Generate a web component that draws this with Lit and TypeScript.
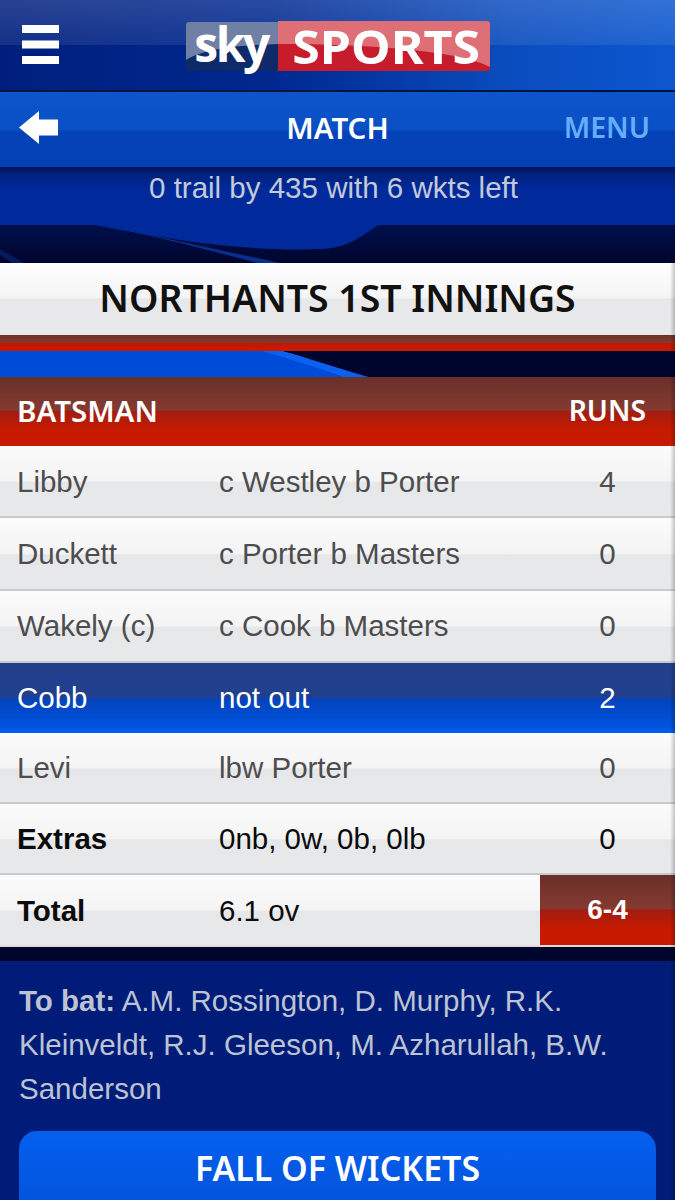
import {css, html, LitElement} from 'lit';
import {customElement} from 'lit/decorators.js';
import {classMap} from 'lit/directives/class-map.js';

interface Row {
  name: string;
  how: string;
  runs: string;
  kind?: 'live' | 'extras' | 'total';
}

const rows: Row[] = [
  {name: 'Libby', how: 'c Westley b Porter', runs: '4'},
  {name: 'Duckett', how: 'c Porter b Masters', runs: '0'},
  {name: 'Wakely (c)', how: 'c Cook b Masters', runs: '0'},
  {name: 'Cobb', how: 'not out', runs: '2', kind: 'live'},
  {name: 'Levi', how: 'lbw Porter', runs: '0'},
  {name: 'Extras', how: '0nb, 0w, 0b, 0lb', runs: '0', kind: 'extras'},
  {name: 'Total', how: '6.1 ov', runs: '6-4', kind: 'total'},
];

@customElement('app-root')
export class AppRoot extends LitElement {
  override render() {
    return html`
      <header class="top">
        <svg class="burger" viewBox="0 0 37 39" aria-hidden="true">
          <path d="M0 0h37v8H0zM0 15.500h37v8H0zM0 31h37v8H0z" fill="#fff" />
        </svg>
        <div class="logo">
          <svg class="logo-bg" viewBox="0 0 304 50" aria-hidden="true">
            <path d="M3 1h89v49H3a3 3 0 0 1-3-3V4a3 3 0 0 1 3-3z" fill="#0f2a68" />
            <path d="M92 0h209a3 3 0 0 1 3 3v44a3 3 0 0 1-3 3H92z" fill="#c61c2c" />
            <path d="M3 1h89v22C60 24 20 26 0 39V4a3 3 0 0 1 3-3z" fill="#6f80a4" />
            <path d="M92 0h209a3 3 0 0 1 3 3v43c-30-16-120-23-212-23z" fill="#df6f77" />
          </svg>
          <span class="sky">sky</span>
          <span class="sports"><span>SPORTS</span></span>
        </div>
      </header>

      <nav class="nav">
        <svg class="back" viewBox="0 0 39 33" aria-hidden="true">
          <path d="M0 16.500 20 0v8.500h19v16H20V33z" fill="#fff" />
        </svg>
        <span class="nav-title">MATCH</span>
        <span class="nav-menu">MENU</span>
      </nav>

      <section class="status">
        <svg class="swoosh" viewBox="0 0 675 38" preserveAspectRatio="none" aria-hidden="true">
          <defs>
            <linearGradient id="dark" x1="0" x2="0" y1="0" y2="1">
              <stop offset="0" stop-color="#000f4c" />
              <stop offset="1" stop-color="#00052e" />
            </linearGradient>
          </defs>
          <path d="M0 0h95c70 14 150 27 225 24 28-1 40-12 58-24h297v38H0z" fill="url(#dark)" />
          <path d="M100 0c60 12 125 26 180 38h-22C205 24 150 10 100 0z" fill="#07308e" />
          <path d="M0 24l24 14H12L0 30z" fill="#0a2a78" opacity="0.6" />
        </svg>
        <p>0 trail by 435 with 6 wkts left</p>
      </section>

      <h1 class="innings">NORTHANTS 1ST INNINGS</h1>
      <div class="red-strip"></div>
      <div class="swoosh-blue">
        <svg viewBox="0 0 675 26" aria-hidden="true">
          <path d="M0 0h282l86 26H0z" fill="#004cd8" />
          <path d="M262 0h20c30 8 56 18 86 26h-24C316 16 290 8 262 0z" fill="#0c62f0" />
        </svg>
      </div>

      <div class="thead">
        <span class="col-name">BATSMAN</span>
        <span>RUNS</span>
      </div>

      ${rows.map(
        (r) => html`
          <div class="row ${classMap({[r.kind ?? 'plain']: true})}">
            <span class="name">${r.name}</span>
            <span class="how">${r.how}</span>
            <span class="runs">${r.runs}</span>
          </div>
        `
      )}

      <div class="gap"></div>

      <section class="panel">
        <p><b>To bat:</b> A.M. Rossington, D. Murphy, R.K. Kleinveldt, R.J. Gleeson, M. Azharullah, B.W. Sanderson</p>
        <div class="button">FALL OF WICKETS</div>
      </section>

      <div class="edge"></div>
    `;
  }

  static override styles = css`
    :host {
      display: block;
      position: relative;
      width: 675px;
      height: 1200px;
      overflow: hidden;
      background: #00052e;
      font-family: 'Liberation Sans', Arial, sans-serif;
      --heading: 'Noto Sans', 'Open Sans', sans-serif;
    }

    .top {
      display: flex;
      align-items: center;
      height: 90px;
      padding-left: 22px;
      border-bottom: 2px solid #01123f;
      background:
        linear-gradient(180deg, rgba(255, 255, 255, 0.16) 0%, rgba(255, 255, 255, 0.08) 50%, rgba(0, 0, 0, 0) 50%),
        linear-gradient(90deg, #001f7d 0%, #00288f 40%, #0a4cbe 75%, #0c57cf 100%);
    }

    .burger {
      width: 37px;
      height: 39px;
      margin-top: -1px;
      flex: none;
    }

    .logo {
      display: flex;
      position: relative;
      height: 50px;
      width: 304px;
      margin: 1px 0 0 127px;
    }

    .logo-bg {
      position: absolute;
      inset: 0;
      width: 304px;
      height: 50px;
    }

    .logo > span {
      position: relative;
      display: flex;
      align-items: center;
      justify-content: center;
      color: #fff;
      font-weight: 700;
      box-sizing: border-box;
    }

    .sky {
      width: 92px;
      padding: 0 2px 5px 0;
      font-family: 'Open Sans', sans-serif;
      font-size: 48px;
      letter-spacing: -2.5px;
    }

    .sports {
      flex: 1;
      padding-left: 5px;
      font-family: 'Noto Sans', sans-serif;
      font-size: 46px;
    }

    .sports span {
      display: block;
      transform: scaleX(1.09);
    }

    .nav {
      display: grid;
      grid-template-columns: 1fr auto 1fr;
      align-items: center;
      height: 75px;
      box-sizing: border-box;
      padding: 0 26px 5px;
      background: linear-gradient(180deg, #0c55cc 0%, #0a4fc4 50%, #0442b8 53%, #0340b4 100%);
      font-family: var(--heading);
      font-weight: 600;
      font-size: 29.500px;
    }

    .back {
      width: 39px;
      height: 33px;
      margin-left: -7px;
    }

    .nav-title {
      color: #fff;
    }

    .nav-menu {
      justify-self: end;
      margin-right: -1px;
      color: #66aefc;
      font-size: 28.500px;
    }

    .status {
      position: relative;
      height: 96px;
      overflow: hidden;
      background: linear-gradient(180deg, #00145c 0%, #00227f 8%, #002a9c 25%, #002a9c 100%);
    }

    .status p {
      position: relative;
      margin: 0;
      padding: 3px 8px 0 0;
      text-align: center;
      color: #c3cad9;
      font-size: 29.500px;
      line-height: 36px;
    }

    .swoosh {
      position: absolute;
      left: 0;
      bottom: 0;
      width: 675px;
      height: 38px;
    }

    .innings {
      margin: 0;
      height: 72px;
      line-height: 69px;
      text-align: center;
      color: #111;
      font-family: var(--heading);
      font-weight: 600;
      font-size: 37.400px;
      background: linear-gradient(180deg, #fff 0%, #f4f4f5 48%, #e8e8ea 50%, #e8e9eb 100%);
    }

    .red-strip {
      height: 16px;
      background: linear-gradient(180deg, #6c3028 0%, #853a2e 48%, #c21800 50%, #c81a00 100%);
    }

    .swoosh-blue {
      height: 26px;
      background: #00052e;
    }

    .swoosh-blue svg {
      display: block;
      width: 675px;
      height: 26px;
    }

    .thead {
      display: flex;
      justify-content: space-between;
      align-items: center;
      height: 69px;
      padding: 0 29px 3px 18px;
      box-sizing: border-box;
      color: #fff;
      font-family: var(--heading);
      font-weight: 600;
      font-size: 28.300px;
      background: linear-gradient(180deg, #69302a 0%, #853a30 48%, #a21d10 50%, #c81a00 78%, #c81a00 100%);
    }

    .col-name {
      margin-left: -1px;
      font-size: 29.500px;
    }

    .row {
      display: grid;
      grid-template-columns: 202px 1fr 135px;
      align-items: center;
      height: 72.300px;
      box-sizing: border-box;
      padding: 1px 0 0 17px;
      color: #4d4d4f;
      font-size: 29.500px;
      border-bottom: 2px solid #c9cacc;
      background: linear-gradient(180deg, #fbfbfb 0%, #f4f4f5 50%, #e6e7e9 52%, #e8e9eb 100%);
    }

    .row.live ~ .row {
      height: 71.300px;
    }

    .runs {
      text-align: center;
      align-self: stretch;
      display: flex;
      align-items: center;
      justify-content: center;
    }

    .row.live {
      height: 70px;
      color: #fff;
      border-bottom: none;
      background: linear-gradient(180deg, #24408c 0%, #20408e 48%, #0443bc 52%, #0054e0 92%, #0060f4 100%);
    }

    .row.extras,
    .row.total {
      color: #0b0b0b;
    }

    .extras .name,
    .total .name {
      font-weight: 700;
    }

    .row.total {
      border-bottom-color: #e3d9d6;
    }

    .total .runs {
      color: #fff;
      font-weight: 700;
      font-size: 28px;
      margin-top: -1px;
      background: linear-gradient(180deg, #69302a 0%, #853a30 48%, #a21d10 50%, #c81a00 78%, #c81a00 100%);
    }

    .gap {
      height: 14px;
      background: #00052e;
    }

    .panel {
      height: 239px;
      padding: 18px 19px 0;
      box-sizing: border-box;
      background: #001b78;
    }

    .panel p {
      margin: 0 0 20px;
      color: #bcc4d4;
      font-size: 29.500px;
      line-height: 44px;
    }

    .button {
      height: 80px;
      padding-top: 16px;
      box-sizing: border-box;
      border-radius: 18px 18px 0 0;
      text-align: center;
      color: #fff;
      font-family: var(--heading);
      font-weight: 600;
      font-size: 33.900px;
      line-height: 42px;
      background: linear-gradient(180deg, #0460f0 0%, #0452d8 100%);
    }

    .edge {
      position: absolute;
      top: 263px;
      right: 0;
      bottom: 0;
      width: 5px;
      background: linear-gradient(90deg, rgba(0, 0, 0, 0), rgba(0, 0, 0, 0.22));
      pointer-events: none;
    }
  `;
}

declare global {
  interface HTMLElementTagNameMap {
    'app-root': AppRoot;
  }
}
